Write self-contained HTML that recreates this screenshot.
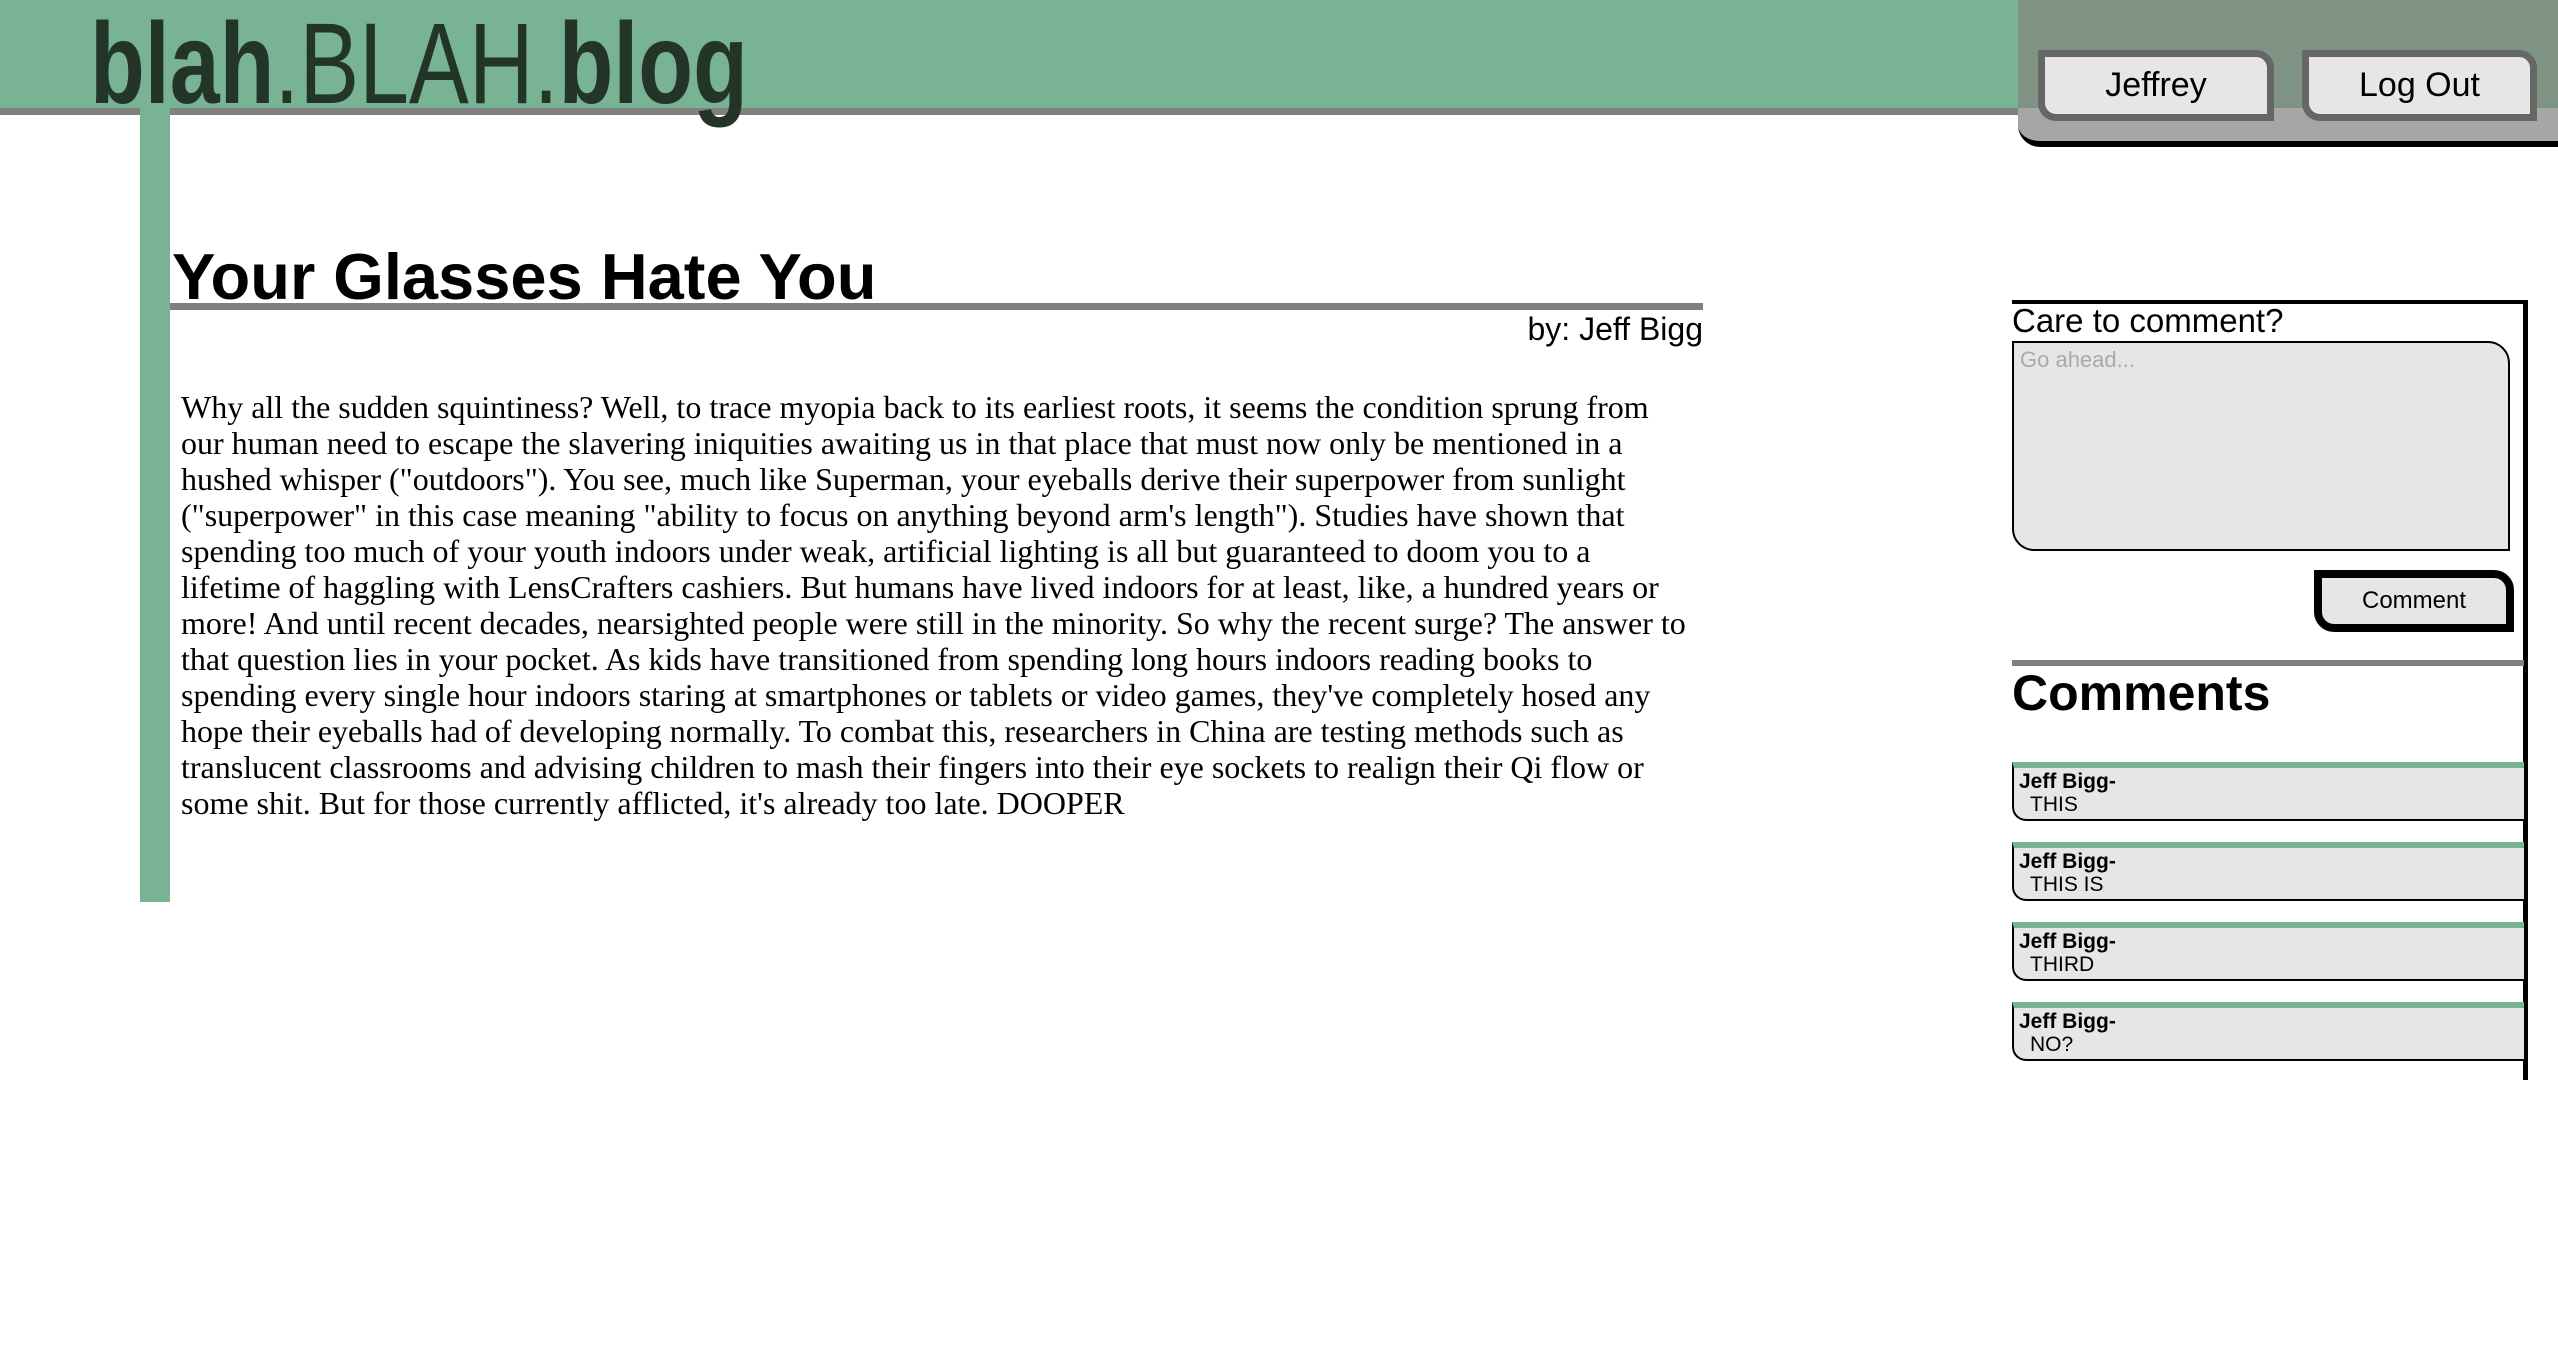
<!DOCTYPE html>
<html><head><meta charset="utf-8"><style>
*{margin:0;padding:0;box-sizing:border-box}
body{width:2558px;height:1356px;background:#fff;position:relative;overflow:hidden;font-family:"Liberation Sans",sans-serif}
.hdr{position:absolute;left:0;top:0;width:2018px;height:108px;background:#78b394}
.hline{position:absolute;left:0;top:108px;width:2040px;height:7px;background:#808080}
.logo{position:absolute;left:90px;top:7px;font-size:115px;line-height:115px;color:#233528;white-space:nowrap;transform:scaleX(0.78);transform-origin:0 0}
.logo b{font-weight:bold}
.vbar{position:absolute;left:140px;top:108px;width:30px;height:794px;background:#78b394}
.panel{position:absolute;left:2018px;top:0;width:540px;height:147px;background:#a6a6a6;border-bottom:6px solid #000;border-bottom-left-radius:22px}
.panel .top{position:absolute;left:0;top:0;width:540px;height:108px;background:#7f9385}
.btn{position:absolute;top:50px;height:71px;background:#e6e6e6;border:7px solid #666;border-radius:0 18px 0 18px;font-size:34px;text-align:center;line-height:56px;color:#000}
h1{position:absolute;left:172px;top:240px;font-size:65px;font-weight:bold;line-height:74px;white-space:nowrap}
.uline{position:absolute;left:170px;top:303px;width:1533px;height:7px;background:#808080}
.by{position:absolute;right:855px;top:309px;font-size:32px;line-height:40px}
.body{position:absolute;left:181px;top:389px;width:1512px;font-family:"Liberation Serif",serif;font-size:32px;line-height:36px;color:#000}
.cbox{position:absolute;left:2012px;top:300px;width:516px;height:780px;border-top:4px solid #000;border-right:5px solid #000}
.care{position:absolute;left:2012px;top:302px;font-size:33px;line-height:38px}
.ta{position:absolute;left:2012px;top:341px;width:498px;height:210px;background:#e6e6e6;border:2px solid #000;border-radius:0 22px 0 22px;color:#aaa;font-size:22px;padding:4px 6px}
.cbtn{position:absolute;left:2314px;top:570px;width:200px;height:62px;background:#e6e6e6;border:8px solid #000;border-radius:0 20px 0 20px;font-size:24px;text-align:center;line-height:46px}
.gl{position:absolute;left:2012px;top:660px;width:512px;height:6px;background:#808080}
h2{position:absolute;left:2012px;top:662px;font-size:50px;font-weight:bold;line-height:62px}
.cm{position:absolute;left:2012px;width:512px;height:59px;background:#e6e6e6;border-top:6px solid #78b394;border-left:2px solid #000;border-bottom:2px solid #000;border-bottom-left-radius:14px;font-size:21px;line-height:23px;padding:2px 0 0 5px}
.cm b{display:block}
.cm span{padding-left:11px}
</style></head><body>
<div class="hdr"></div>
<div class="hline"></div>
<div class="logo"><b>blah</b>.BLAH.<b>blog</b></div>
<div class="vbar"></div>
<div class="panel"><div class="top"></div>
<div class="btn" style="left:20px;width:236px">Jeffrey</div>
<div class="btn" style="left:284px;width:235px">Log Out</div></div>
<h1>Your Glasses Hate You</h1>
<div class="uline"></div>
<div class="by">by: Jeff Bigg</div>
<div class="body">Why all the sudden squintiness? Well, to trace myopia back to its earliest roots, it seems the condition sprung from our human need to escape the slavering iniquities awaiting us in that place that must now only be mentioned in a hushed whisper ("outdoors"). You see, much like Superman, your eyeballs derive their superpower from sunlight ("superpower" in this case meaning "ability to focus on anything beyond arm's length"). Studies have shown that spending too much of your youth indoors under weak, artificial lighting is all but guaranteed to doom you to a lifetime of haggling with LensCrafters cashiers. But humans have lived indoors for at least, like, a hundred years or more! And until recent decades, nearsighted people were still in the minority. So why the recent surge? The answer to that question lies in your pocket. As kids have transitioned from spending long hours indoors reading books to spending every single hour indoors staring at smartphones or tablets or video games, they've completely hosed any hope their eyeballs had of developing normally. To combat this, researchers in China are testing methods such as translucent classrooms and advising children to mash their fingers into their eye sockets to realign their Qi flow or some shit. But for those currently afflicted, it's already too late. DOOPER</div>
<div class="cbox"></div>
<div class="care">Care to comment?</div>
<div class="ta">Go ahead...</div>
<div class="cbtn">Comment</div>
<div class="gl"></div>
<h2>Comments</h2>
<div class="cm" style="top:762px"><b>Jeff Bigg-</b><span>THIS</span></div>
<div class="cm" style="top:842px"><b>Jeff Bigg-</b><span>THIS IS</span></div>
<div class="cm" style="top:922px"><b>Jeff Bigg-</b><span>THIRD</span></div>
<div class="cm" style="top:1002px"><b>Jeff Bigg-</b><span>NO?</span></div>
</body></html>
